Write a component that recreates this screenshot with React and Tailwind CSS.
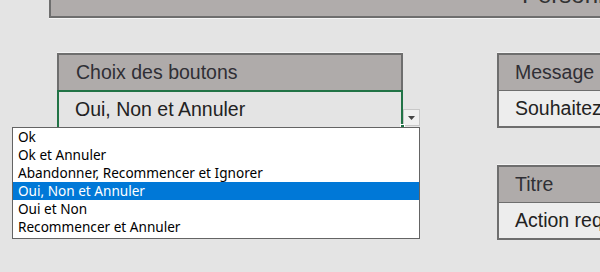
import React from "react";

const items = [
  "Ok",
  "Ok et Annuler",
  "Abandonner, Recommencer et Ignorer",
  "Oui, Non et Annuler",
  "Oui et Non",
  "Recommencer et Annuler",
];

function Box({ title, value, className = "" }) {
  return (
    <div className={`flex flex-col border-2 border-[#6e6e6e] shadow-[0_-1px_0_#f4f4f4] ${className}`}>
      <div className="h-[36px] flex items-center pl-[16px] bg-[#afabaa] text-[#2f2f35] text-[19.5px] border-b border-[#6e6e6e] whitespace-nowrap">
        {title}
      </div>
      <div className="h-[35px] flex items-center pl-[16px] bg-[#ededed] text-[#222] text-[19.5px] whitespace-nowrap">
        {value}
      </div>
    </div>
  );
}

export default function App() {
  const selected = 3;

  return (
    <div className="relative w-[600px] h-[272px] overflow-hidden bg-[#e4e4e4] font-['Liberation_Sans',Arial,sans-serif]">
      {/* Bandeau du haut, coupé */}
      <div className="ml-[49px] h-[18px] overflow-hidden bg-[#b0acab] border-l-2 border-b-2 border-[#6e6e6e] shadow-[0_1px_0_#f6f6f6]">
        <div className="ml-[471px] -mt-[23px] text-[24px] text-[#333] whitespace-nowrap">Personnalisation</div>
      </div>

      <div className="flex mt-[35px]">
        {/* Choix des boutons */}
        <div className="ml-[57px] w-[346px] shrink-0 flex flex-col">
          <div className="h-[37px] flex items-center pl-[17px] bg-[#afabaa] text-[#2f2f35] text-[19.5px] border-2 border-b-0 border-[#6e6e6e] shadow-[0_-1px_0_#f4f4f4]">
            Choix des boutons
          </div>
          <div className="h-[37px] flex items-center pl-[16px] text-[#222] text-[19.5px] border-2 border-b-0 border-[#217346]">
            Oui, Non et Annuler
          </div>
        </div>

        {/* Colonne de droite */}
        <div className="ml-[94px] w-[150px] shrink-0 flex flex-col">
          <Box title="Message" value="Souhaitez-vous continuer ?" />
          <Box title="Titre" value="Action requise" className="mt-[37px]" />
        </div>
      </div>

      {/* Bouton de la liste déroulante */}
      <div className="absolute left-[403px] top-[109px] w-[17px] h-[17px] bg-[#f0f0f0] border border-[#c8c8c8] flex items-center justify-center">
        <svg width="7" height="4" viewBox="0 0 7 4">
          <path d="M0 0h7L3.5 4z" fill="#444" />
        </svg>
      </div>
      <div className="absolute left-[400px] top-[124px] w-[5px] h-[5px] bg-[#217346] border border-white" />

      {/* Liste ouverte */}
      <div className="absolute left-[12px] top-[127px] w-[408px] h-[112px] bg-white border border-[#646464] font-['Noto_Sans',sans-serif] text-[13.6px] text-black">
        {items.map((it, i) => (
          <div
            key={it}
            className={`h-[18px] flex items-center pl-[5px] pt-[1px] whitespace-nowrap ${
              i === selected ? "bg-[#0078d7] text-white" : ""
            }`}
          >
            {it}
          </div>
        ))}
      </div>
    </div>
  );
}
